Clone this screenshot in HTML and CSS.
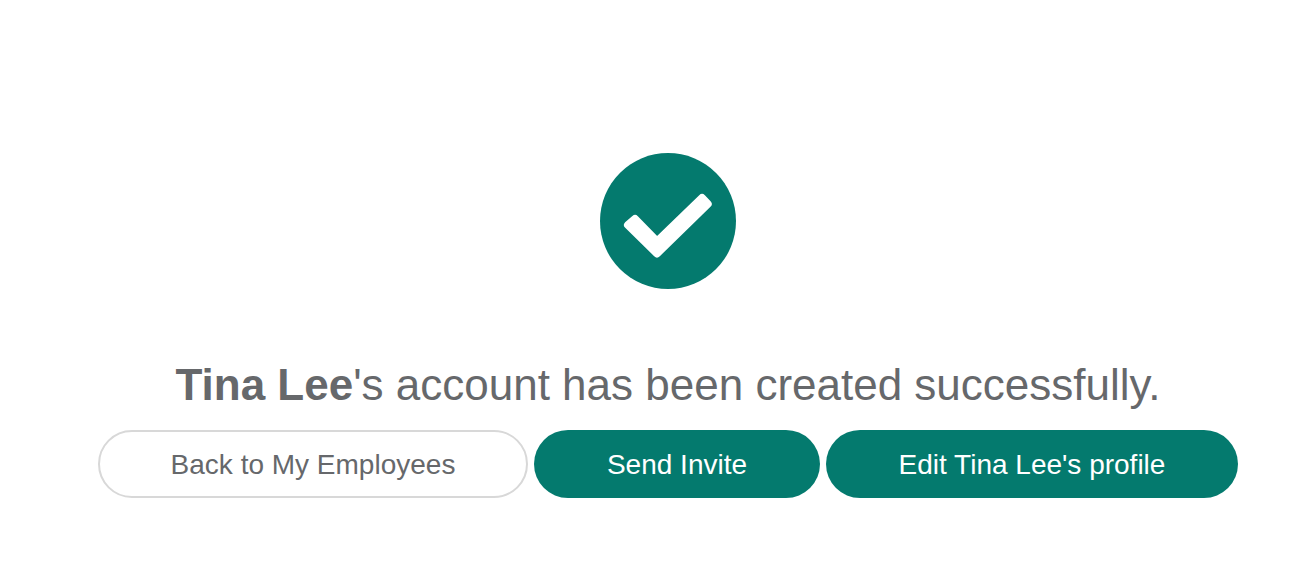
FILE: index.html
```html
<!DOCTYPE html>
<html lang="en">
<head>
    <meta charset="UTF-8">
    <title>Account created</title>
    <link rel="stylesheet" href="styles.css">
</head>
<body>
    <div class="confirmation">
        <svg class="check-icon" width="136" height="136" viewBox="0 0 136 136">
            <circle cx="68" cy="68" r="68" fill="#047a6e"/>
            <path d="M28 72 L35 66 L57 88.6 L102 45 L107.7 51 L57 100.4 Z" fill="#fff" stroke="#fff" stroke-width="8" stroke-linejoin="round"/>
        </svg>
        <p class="message"><strong>Tina Lee</strong>'s account has been created successfully.</p>
        <div class="actions">
            <button class="btn btn-outline">Back to My Employees</button>
            <button class="btn btn-invite">Send Invite</button>
            <button class="btn btn-edit">Edit Tina Lee's profile</button>
        </div>
    </div>
</body>
</html>
```

FILE: styles.css
```css
body {
    margin: 0;
    background-color: #fff;
    color: #66686b;
    font-family: 'Liberation Sans', Arial, sans-serif;
}

.confirmation {
    display: flex;
    flex-direction: column;
    align-items: center;
    padding-top: 153px;
    padding-left: 98px;
    width: 1140px;
}

.check-icon {
    display: block;
    margin-bottom: 71px;
}

.message {
    margin: 0 0 20px;
    font-size: 44px;
    line-height: 50px;
}

.actions {
    display: flex;
    gap: 6px;
}

.btn {
    height: 68px;
    padding: 2px 0 0;
    border-radius: 34px;
    border: none;
    font-family: inherit;
    font-size: 28px;
    cursor: pointer;
}

.btn-outline {
    width: 430px;
    background-color: #fff;
    color: #66686b;
    border: 2px solid #d8d8d8;
}

.btn-invite {
    width: 286px;
    background-color: #047a6e;
    color: #fff;
}

.btn-edit {
    width: 412px;
    background-color: #047a6e;
    color: #fff;
}
```
